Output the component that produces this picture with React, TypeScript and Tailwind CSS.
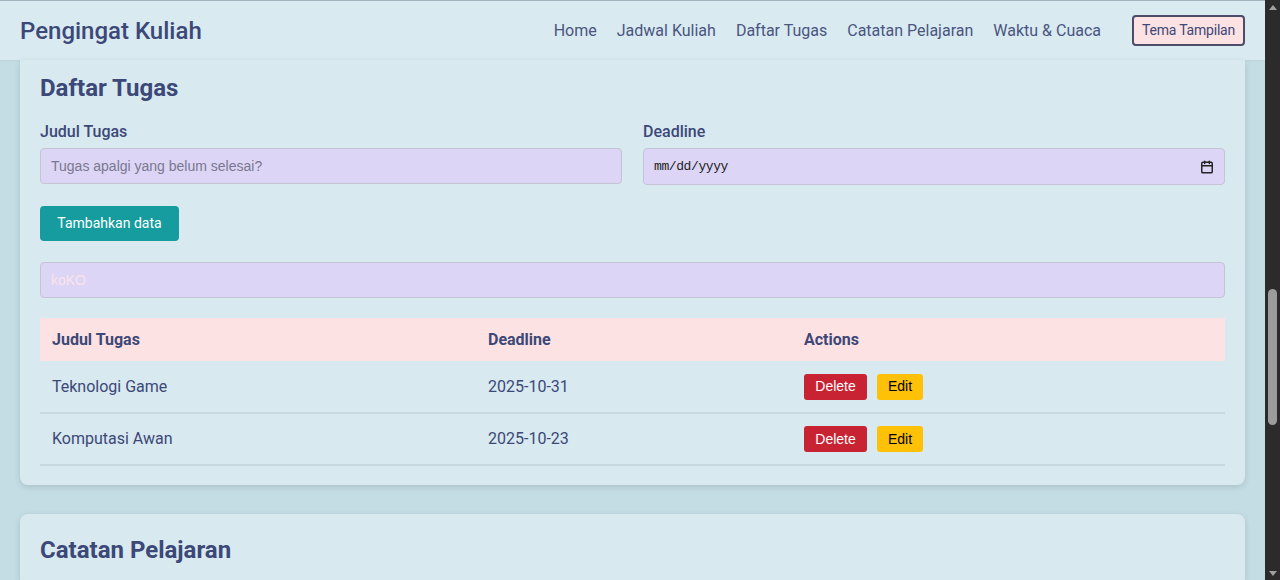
import { Calendar } from "lucide-react"

const tasks = [
  { title: "Teknologi Game", deadline: "2025-10-31" },
  { title: "Komputasi Awan", deadline: "2025-10-23" },
]

const navLinks = ["Home", "Jadwal Kuliah", "Daftar Tugas", "Catatan Pelajaran", "Waktu & Cuaca"]

function Navbar() {
  return (
    <header className="h-[60px] shrink-0 flex items-center justify-between px-5 bg-[#d9eaf1] border-t border-[#a3b6bf] shadow-[0_1px_2px_rgba(0,0,0,0.04)]">
      <h1 className="text-[24px] font-medium text-[#3c4877]">Pengingat Kuliah</h1>
      <nav className="flex items-center">
        <ul className="flex items-center gap-5 text-[16px] text-[#4a5580]">
          {navLinks.map((link) => (
            <li key={link}>{link}</li>
          ))}
        </ul>
        <button className="ml-[31px] h-[31px] w-[113px] text-[14px] tracking-[-0.2px] text-[#3c4877] bg-[#fde2e4] border-2 border-[#4c4b68] rounded-[4px]">
          Tema Tampilan
        </button>
      </nav>
    </header>
  )
}

function TaskCard() {
  return (
    <section className="bg-[#d8e9f0] rounded-b-lg shadow-[0_2px_6px_rgba(0,0,0,0.12)] px-5 pt-3 pb-[19px]">
      <h2 className="text-[24px] leading-8 font-bold text-[#3c4877]">Daftar Tugas</h2>

      <div className="grid grid-cols-2 gap-x-[21px] mt-4">
        <div>
          <label className="block text-[16px] leading-6 font-medium text-[#3c4877] mb-1">Judul Tugas</label>
          <input
            type="text"
            placeholder="Tugas apalgi yang belum selesai?"
            className="w-full h-[36px] px-[10px] text-[14px] font-['Liberation_Sans',sans-serif] bg-[#dcd5f5] border border-[#c4c4d6] rounded-[4px] placeholder:text-[#7a7890] outline-none"
          />
        </div>
        <div>
          <label className="block text-[16px] leading-6 font-medium text-[#3c4877] mb-1">Deadline</label>
          <div className="w-full h-[37px] px-[10px] flex items-center justify-between bg-[#dcd5f5] border border-[#c4c4d6] rounded-[4px]">
            <span className="font-['Liberation_Mono',monospace] text-[13px] tracking-[-0.4px] text-[#222]">mm/dd/yyyy</span>
            <Calendar className="w-[14px] h-[14px] text-[#222]" strokeWidth={2.5} />
          </div>
        </div>
      </div>

      <button className="mt-[21px] h-[35px] w-[139px] rounded-[4px] bg-[#169c9e] text-white text-[14px]">
        Tambahkan data
      </button>

      <input
        type="text"
        defaultValue="koKO"
        className="mt-[21px] block w-full h-[36px] px-[10px] text-[14px] font-['Liberation_Sans',sans-serif] text-[#fbe3ea] bg-[#dcd5f5] border border-[#c4c4d6] rounded-[4px] outline-none"
      />

      <table className="mt-5 w-full border-collapse text-[16px] text-[#3c4877]">
        <thead>
          <tr className="bg-[#fde2e4] h-[43px]">
            <th className="w-[436px] px-3 text-left font-bold">Judul Tugas</th>
            <th className="w-[316px] px-3 text-left font-bold">Deadline</th>
            <th className="px-3 text-left font-bold">Actions</th>
          </tr>
        </thead>
        <tbody>
          {tasks.map((t) => (
            <tr key={t.title} className="h-[52px] border-b-2 border-[#c9d9e0]">
              <td className="px-3">{t.title}</td>
              <td className="px-3">{t.deadline}</td>
              <td className="px-3">
                <div className="flex items-center gap-[10px] font-['Liberation_Sans',sans-serif] text-[14px]">
                  <button className="h-[26px] w-[63px] rounded-[3px] bg-[#c82333] text-white">Delete</button>
                  <button className="h-[26px] w-[46px] rounded-[3px] bg-[#ffc107] text-black">Edit</button>
                </div>
              </td>
            </tr>
          ))}
        </tbody>
      </table>
    </section>
  )
}

function Scrollbar() {
  return (
    <div className="w-[15px] shrink-0 bg-[#2b2b2b] flex flex-col items-center">
      <div className="mt-[5px] w-0 h-0 border-l-[4px] border-r-[4px] border-b-[5px] border-l-transparent border-r-transparent border-b-[#a0a0a0]" />
      <div className="mt-[279px] w-[9px] h-[136px] rounded-full bg-[#9c9c9c]" />
      <div className="mt-auto mb-[4px] w-0 h-0 border-l-[4px] border-r-[4px] border-t-[5px] border-l-transparent border-r-transparent border-t-[#a0a0a0]" />
    </div>
  )
}

export default function App() {
  return (
    <div className="flex h-[580px] w-[1280px] overflow-hidden font-['Roboto',sans-serif]">
      <div className="flex-1 flex flex-col bg-[#c4dce4] overflow-hidden">
        <Navbar />
        <main className="px-5">
          <TaskCard />
          <section className="mt-[29px] bg-[#d8e9f0] rounded-lg shadow-[0_2px_6px_rgba(0,0,0,0.12)] px-5 pt-5 pb-5">
            <h2 className="text-[24px] leading-8 font-bold text-[#3c4877]">Catatan Pelajaran</h2>
          </section>
        </main>
      </div>
      <Scrollbar />
    </div>
  )
}
